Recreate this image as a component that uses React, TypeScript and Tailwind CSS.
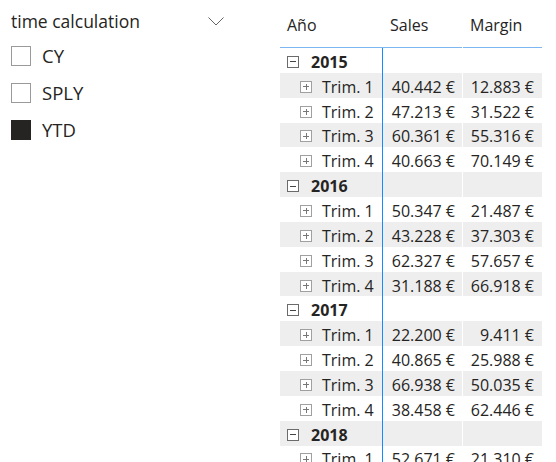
import React from 'react'

type Row = { kind: 'year'; label: string } | { kind: 'q'; label: string; sales: string; margin: string }

const data: [string, [string, string][]][] = [
  ['2015', [['40.442 €', '12.883 €'], ['47.213 €', '31.522 €'], ['60.361 €', '55.316 €'], ['40.663 €', '70.149 €']]],
  ['2016', [['50.347 €', '21.487 €'], ['43.228 €', '37.303 €'], ['62.327 €', '57.657 €'], ['31.188 €', '66.918 €']]],
  ['2017', [['22.200 €', '9.411 €'], ['40.865 €', '25.988 €'], ['66.938 €', '50.035 €'], ['38.458 €', '62.446 €']]],
  ['2018', [['52.671 €', '21.310 €']]],
]

const rows: Row[] = data.flatMap(([year, qs]) => [
  { kind: 'year' as const, label: year },
  ...qs.map(([sales, margin], i) => ({ kind: 'q' as const, label: `Trim. ${i + 1}`, sales, margin })),
])

function MinusBox() {
  return (
    <span className="flex h-[12px] w-[12px] items-center justify-center border border-[#6b6b6b] bg-white">
      <span className="h-px w-[6px] bg-[#444]" />
    </span>
  )
}

function PlusBox() {
  return (
    <span className="relative flex h-[12px] w-[12px] items-center justify-center border border-[#a0a0a0] bg-white">
      <span className="h-px w-[6px] bg-[#777]" />
      <span className="absolute h-[6px] w-px bg-[#777]" />
    </span>
  )
}

function Checkbox({ checked }: { checked?: boolean }) {
  return (
    <span
      className={
        checked
          ? 'h-[20px] w-[20px] shrink-0 bg-[#252423]'
          : 'h-[20px] w-[20px] shrink-0 border border-[#9a9a9a] bg-white'
      }
    />
  )
}

export default function App() {
  return (
    <div
      className="flex h-[462px] w-[556px] overflow-hidden bg-white text-[#252423]"
      style={{ fontFamily: '"Segoe UI", "Open Sans", sans-serif' }}
    >
      {/* Slicer */}
      <div className="w-[280px] shrink-0 pl-[11px] pt-[8px]">
        <div className="flex h-[28px] items-center justify-between pr-[56px]">
          <span className="text-[17.5px] leading-none">time calculation</span>
          <svg width="16" height="9" viewBox="0 0 16 9" className="mb-[1px]">
            <path d="M0.5 0.5 L8 8 L15.5 0.5" fill="none" stroke="#666" strokeWidth="1" />
          </svg>
        </div>
        <div className="mt-[10px] flex flex-col gap-[17px]">
          {[
            ['CY', false],
            ['SPLY', false],
            ['YTD', true],
          ].map(([label, checked]) => (
            <div key={label as string} className="flex h-[20px] items-center gap-[11px]">
              <Checkbox checked={checked as boolean} />
              <span className="text-[18.5px] leading-none">{label as string}</span>
            </div>
          ))}
        </div>
      </div>

      {/* Matrix */}
      <div className="w-[262px] shrink-0 text-[16px]">
        <div className="flex h-[48px]">
          <div className="flex w-[102px] flex-col">
            <div className="flex flex-1 items-center pl-[7px] pt-[3px]">Año</div>
            <div className="h-px bg-[#7db7f2]" />
          </div>
          <div className="flex w-[80px] flex-col">
            <div className="flex flex-1 items-center pl-[8px] pt-[3px]">Sales</div>
            <div className="h-px bg-[#7db7f2]" />
          </div>
          <div className="flex w-[80px] flex-col border-l border-white">
            <div className="flex flex-1 items-center pl-[7px] pt-[3px]">Margin</div>
            <div className="h-px bg-[#7db7f2]" />
          </div>
        </div>
        {rows.map((r, i) => {
          const bg = i % 2 === 1 ? 'bg-[#eeeeee]' : 'bg-white'
          return (
            <div key={i} className="flex h-[24.85px]">
              <div className={`flex w-[102px] items-center pt-[3px] ${bg}`}>
                {r.kind === 'year' ? (
                  <div className="flex items-center gap-[12px] pl-[7px]">
                    <MinusBox />
                    <span className="font-bold">{r.label}</span>
                  </div>
                ) : (
                  <div className="flex items-center gap-[10px] pl-[20px]">
                    <PlusBox />
                    <span>{r.label}</span>
                  </div>
                )}
              </div>
              <div className={`flex w-[80px] items-center justify-end border-l border-[#118dff] pr-[7px] pt-[3px] ${bg}`}>
                {r.kind === 'q' ? r.sales : ''}
              </div>
              <div className={`flex w-[80px] items-center justify-end border-l border-white pr-[8px] pt-[3px] ${bg}`}>
                {r.kind === 'q' ? r.margin : ''}
              </div>
            </div>
          )
        })}
      </div>
    </div>
  )
}
